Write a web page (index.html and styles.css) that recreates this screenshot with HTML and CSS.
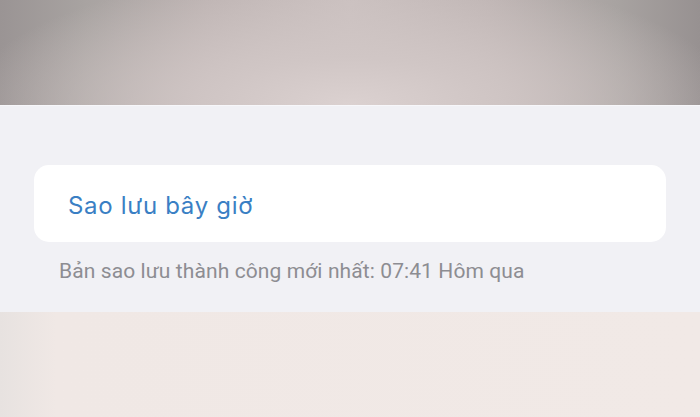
FILE: index.html
```html
<!DOCTYPE html>
<html lang="vi">
<head>
<meta charset="utf-8">
<link rel="stylesheet" href="styles.css">
</head>
<body>
<div class="page">
  <div class="top-band"></div>
  <section class="panel">
    <div class="card">
      <span class="action">Sao lưu bây giờ</span>
    </div>
    <p class="caption">Bản sao lưu thành công mới nhất: 07:41 Hôm qua</p>
  </section>
  <div class="bottom-band"></div>
</div>
</body>
</html>
```
FILE: styles.css
```css
* { box-sizing: border-box; }
html, body { margin: 0; padding: 0; }
body {
  width: 700px;
  height: 417px;
  overflow: hidden;
  font-family: "Roboto", "Liberation Sans", sans-serif;
}
.page {
  display: flex;
  flex-direction: column;
  height: 417px;
}
.top-band {
  height: 105px;
  background:
    radial-gradient(ellipse 55% 130% at 50% 100%, #dbd1d0 0%, #d0c6c5 35%, rgba(190,182,181,0) 100%),
    linear-gradient(90deg, #9a9494 0%, #a8a3a1 12%, #bcb2b1 30%, #c9bfbe 50%, #bdb3b2 70%, #a8a3a1 88%, #979191 100%);
}
.panel {
  height: 207px;
  background: #f1f1f5;
  border-top: 1px solid #f7f7fa;
  padding: 59px 34px 0 34px;
  display: flex;
  flex-direction: column;
}
.card {
  height: 77px;
  background: #ffffff;
  border-radius: 15px;
  display: flex;
  align-items: center;
  padding-left: 34px;
}
.action {
  font-family: "Inter", "Roboto", sans-serif;
  font-size: 24px;
  letter-spacing: 0.7px;
  color: #3a7fc4;
  position: relative;
  top: 2px;
}
.caption {
  margin: 17px 0 0 25px;
  font-size: 21px;
  line-height: 24px;
  letter-spacing: 0.1px;
  color: #8d8d92;
}
.bottom-band {
  flex: 1;
  background:
    linear-gradient(90deg, #e7e2e0 0%, #f0e8e5 8%, #f1e9e6 100%);
}
```
